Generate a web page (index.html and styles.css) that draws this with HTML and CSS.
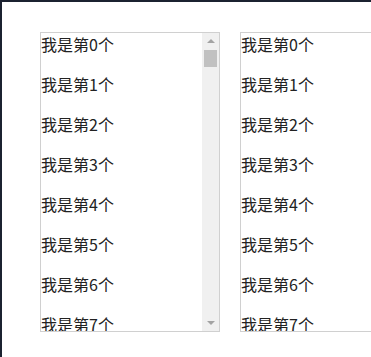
FILE: index.html
```html
<!DOCTYPE html>
<html>
<head>
<meta charset="utf-8">
<link rel="stylesheet" href="styles.css">
</head>
<body>
<div class="page">
  <div class="list has-bar">
    <div class="items">
      <div class="item">我是第0个</div>
      <div class="item">我是第1个</div>
      <div class="item">我是第2个</div>
      <div class="item">我是第3个</div>
      <div class="item">我是第4个</div>
      <div class="item">我是第5个</div>
      <div class="item">我是第6个</div>
      <div class="item">我是第7个</div>
    </div>
    <div class="scrollbar">
      <div class="arrow up"></div>
      <div class="thumb"></div>
      <div class="arrow down"></div>
    </div>
  </div>
  <div class="list">
    <div class="items">
      <div class="item">我是第0个</div>
      <div class="item">我是第1个</div>
      <div class="item">我是第2个</div>
      <div class="item">我是第3个</div>
      <div class="item">我是第4个</div>
      <div class="item">我是第5个</div>
      <div class="item">我是第6个</div>
      <div class="item">我是第7个</div>
    </div>
  </div>
</div>
</body>
</html>
```
FILE: styles.css
```css
html {
  background: #1b2230;
  margin: 0;
  padding: 0;
  height: 100%;
  overflow: hidden;
}
body {
  margin: 2px 0 0 2px;
  background: #ffffff;
  height: calc(100vh - 2px);
  width: calc(100vw - 2px);
  overflow: hidden;
  font-family: "Microsoft YaHei", "Noto Sans CJK SC", "Noto Sans", sans-serif;
  color: #222;
}
.page {
  display: flex;
  gap: 20px;
  padding: 30px 0 0 38px;
}
.list {
  position: relative;
  flex: 0 0 auto;
  width: 180px;
  height: 300px;
  box-sizing: border-box;
  border: 1px solid #d0d0d0;
  overflow: hidden;
}
.items {
  display: flex;
  flex-direction: column;
}
.item {
  flex: 0 0 40px;
  height: 40px;
  font-size: 16px;
  line-height: 22px;
  white-space: nowrap;
}
.scrollbar {
  position: absolute;
  top: 0;
  right: 0;
  width: 17px;
  height: 100%;
  background: #f0f0f0;
  display: flex;
  flex-direction: column;
  align-items: center;
}
.arrow {
  width: 0;
  height: 0;
  border-left: 4px solid transparent;
  border-right: 4px solid transparent;
}
.arrow.up {
  margin-top: 6px;
  border-bottom: 4px solid #a3a3a3;
}
.arrow.down {
  margin-top: auto;
  margin-bottom: 6px;
  border-top: 4px solid #a3a3a3;
}
.thumb {
  margin-top: 7px;
  width: 13px;
  height: 17px;
  background: #c1c1c1;
}
```
